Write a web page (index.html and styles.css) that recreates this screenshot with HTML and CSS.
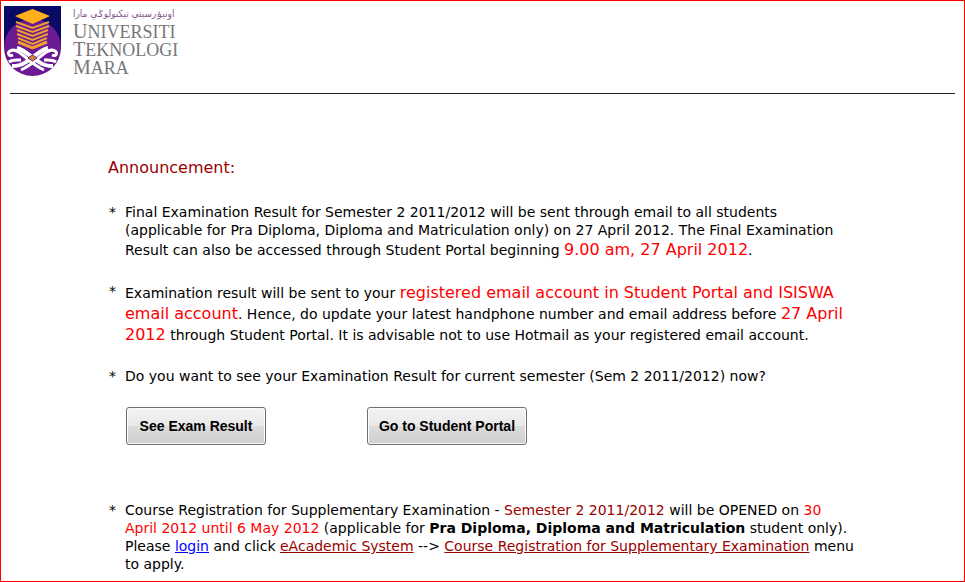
FILE: index.html
```html
<!DOCTYPE html>
<html lang="en">
<head>
    <meta charset="UTF-8">
    <meta name="viewport" content="width=device-width, initial-scale=1.0">
    <title>Universiti Teknologi MARA</title>
    <link rel="stylesheet" href="styles.css">
</head>
<body>
    <div class="page">
        <header class="header">
            <svg class="crest" viewBox="0 0 60 72" aria-hidden="true">
                <path d="M1 1H58V44H1Z" fill="#0a0a66"/>
                <circle cx="29.5" cy="42.5" r="28.5" fill="#6b1a93"/>
                <!-- stacked books -->
                <g fill="none" stroke="#f0a030" stroke-width="2">
                    <path d="M13 17L29.500 23L46 17"/>
                    <path d="M13 21L29.500 27L46 21"/>
                    <path d="M14 25L29.500 31L45 25"/>
                    <path d="M14 29L29.500 35L45 29"/>
                    <path d="M15 33L29.500 39L44 33"/>
                    <path d="M15 37L29.500 43L44 37" stroke-width="3"/>
                </g>
                <path d="M12 11L29.500 4L47 11L29.500 19Z" fill="#ffb01c"/>
                <!-- crossed ribbons -->
                <g fill="none" stroke="#fff" stroke-width="4">
                    <path d="M14 43C22 45 29 53 36 57C40 60 44 61 50 61"/>
                    <path d="M45 43C37 45 30 53 23 57C19 60 15 61 9 61"/>
                    <path d="M10 50C6 52 4 48 7 46C12 43 17 48 21 51C26 55 32 61 41 65" stroke-width="3"/>
                    <path d="M49 50C53 52 55 48 52 46C47 43 42 48 38 51C33 55 27 61 18 65" stroke-width="3"/>
                    <path d="M6 57C10 54 14 55 18 55M53 57C49 54 45 55 41 55" stroke-width="3"/>
                </g>
                <path d="M25 53L29.500 50L34 53L29.500 56Z" fill="#d98a1c" stroke="#6b1a93"/>
            </svg>
            <div class="brand">
                <div class="jawi" lang="ms-Arab" dir="rtl">اونيۏرسيتي تيکنولوݢي مارا</div>
                <div class="brand-name">Universiti</div>
                <div class="brand-name">Teknologi</div>
                <div class="brand-name">Mara</div>
            </div>
        </header>
        <hr class="divider">

        <main class="content">
            <h1>Announcement:</h1>
            <ul class="notices">
                <li>Final Examination Result for Semester 2 2011/2012 will be sent through email to all students (applicable for Pra Diploma, Diploma and Matriculation only) on 27 April 2012. The Final Examination Result can also be accessed through Student Portal beginning <span class="highlight">9.00 am, 27 April 2012</span>.</li>
                <li>Examination result will be sent to your <span class="highlight">registered email account in Student Portal and ISISWA email account</span>. Hence, do update your latest handphone number and email address before <span class="highlight">27 April 2012</span> through Student Portal. It is advisable not to use Hotmail as your registered email account.</li>
                <li>Do you want to see your Examination Result for current semester (Sem 2 2011/2012) now?
                    <div class="actions">
                        <button type="button">See Exam Result</button>
                        <button type="button">Go to Student Portal</button>
                    </div>
                </li>
                <li>Course Registration for Supplementary Examination - <span class="maroon">Semester 2 2011/2012</span> will be OPENED on <span class="red">30 April 2012 until 6 May 2012</span> (applicable for <b>Pra Diploma, Diploma and Matriculation</b> student only). Please <a href="#">login</a> and click <a href="#" class="maroon">eAcademic System</a> --&gt; <a href="#" class="maroon">Course Registration for Supplementary Examination</a> menu to apply.</li>
            </ul>
        </main>
    </div>
</body>
</html>
```
FILE: styles.css
```css
* {
    box-sizing: border-box;
}

body {
    margin: 0;
    background: #fff;
    color: #000;
    font-family: Verdana, "DejaVu Sans", sans-serif;
    font-size: 14px;
    line-height: 18px;
}

.page {
    min-height: 100vh;
    border: 1px solid #f00;
}

.header {
    display: flex;
    gap: 10px;
    padding: 4px 2px 0;
}

.crest {
    width: 60px;
    height: 72px;
}

.jawi {
    height: 17px;
    color: #8a5590;
    font-family: "DejaVu Sans Condensed", "DejaVu Sans", sans-serif;
    font-size: 10px;
    text-align: left;
    white-space: nowrap;
}

.brand-name {
    height: 18px;
    color: #777;
    font-family: "Liberation Serif", serif;
    font-size: 18px;
    text-transform: uppercase;
}

.brand-name::first-letter {
    font-size: 20px;
}

.divider {
    margin: 16px 9px 0;
    border: 0;
    border-top: 1px solid #223;
}

.content {
    max-width: 854px;
    padding: 65px 0 8px 107px;
}

h1 {
    margin: 0 0 26px;
    color: #900;
    font-size: 16px;
    font-weight: normal;
}

.notices {
    margin: 0;
    padding: 0 0 0 17px;
    list-style: none;
}

.notices li {
    margin-bottom: 22px;
}

.notices li::before {
    content: "*";
    float: left;
    margin-left: -16px;
}

.notices li:last-child {
    margin-bottom: 0;
}

.highlight {
    color: #f00;
    font-size: 16px;
    line-height: 21px;
}

.red {
    color: #f00;
}

.maroon,
a.maroon {
    color: #900;
}

a {
    color: #00f;
}

.actions {
    display: grid;
    grid-template-columns: 140px 160px;
    gap: 101px;
    padding: 22px 1px 34px;
}

button {
    height: 38px;
    padding: 0;
    border: 1px solid #707070;
    border-radius: 3px;
    background: linear-gradient(#f4f4f4, #e8e8e8 50%, #dcdcdc 50%, #cfcfcf);
    box-shadow: inset 0 0 0 1px #fafafa;
    color: #000;
    font-family: Arial, "Liberation Sans", sans-serif;
    font-size: 14px;
    font-weight: bold;
}
```
